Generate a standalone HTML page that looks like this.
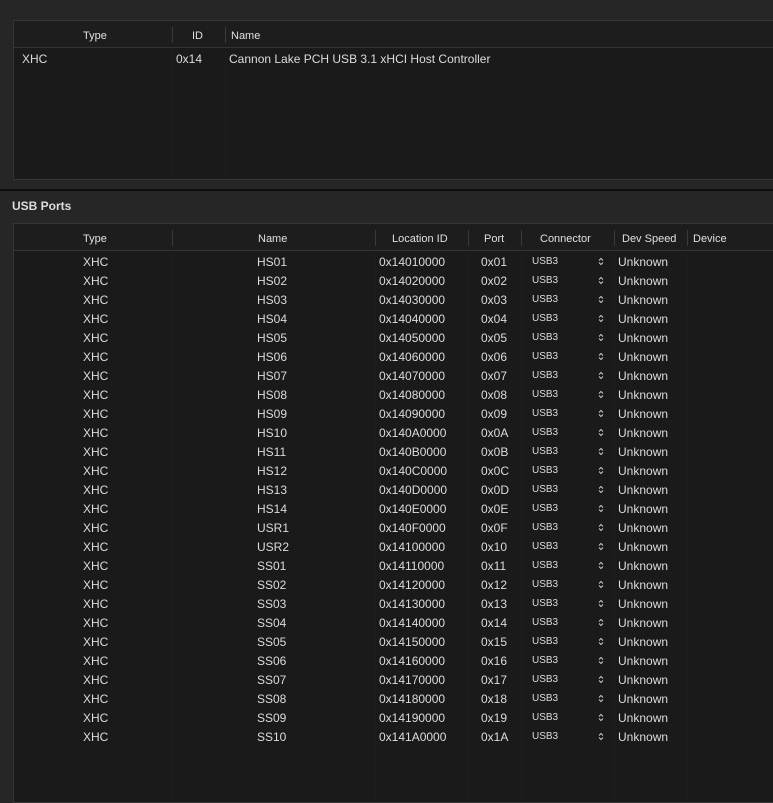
<!DOCTYPE html>
<html><head><style>
*{margin:0;padding:0;box-sizing:border-box}
body{width:773px;height:793px;background:#262626;font-family:"Liberation Sans",sans-serif;color:#dcdcdc;font-size:12px;position:relative;overflow:hidden}
.a{position:absolute;white-space:nowrap}
.tbl{position:absolute;background:#1a1a1a;border:1px solid #363636}
.hd{position:absolute;left:0;right:0;top:0;height:27px;border-bottom:1px solid #343434;background:#1d1d1d}
.sep{position:absolute;width:1px;background:#3a3a3a;top:6px;height:16px}
.col{position:absolute;top:28px;bottom:0;width:1px;background:#1d1d1d}
.h{position:absolute;top:9px;font-size:11px;color:#e0e0e0}
</style></head><body>
<div class="tbl" style="left:13px;top:20px;width:770px;height:160px">
 <div class="hd"></div>
 <div class="sep" style="left:158px"></div><div class="sep" style="left:211px"></div>
 <div class="col" style="left:158px"></div><div class="col" style="left:211px"></div>
 <div class="h" style="left:69px">Type</div><div class="h" style="left:178px">ID</div><div class="h" style="left:217px">Name</div>
 <div class="a" style="left:8px;top:31px">XHC</div><div class="a" style="left:162px;top:31px">0x14</div><div class="a" style="left:215px;top:31px">Cannon Lake PCH USB 3.1 xHCI Host Controller</div>
</div>
<div class="a" style="left:0;top:189px;width:773px;height:2px;background:#0e0e0e"></div>
<div class="a" style="left:12px;top:199px;font-weight:bold;font-size:12px">USB Ports</div>
<div class="tbl" style="left:13px;top:223px;width:770px;height:580px">
 <div class="hd"></div>
 <div class="sep" style="left:158px"></div><div class="sep" style="left:361px"></div><div class="sep" style="left:454px"></div><div class="sep" style="left:507px"></div><div class="sep" style="left:600px"></div><div class="sep" style="left:673px"></div>
 <div class="col" style="left:158px"></div><div class="col" style="left:361px"></div><div class="col" style="left:454px"></div><div class="col" style="left:507px"></div><div class="col" style="left:600px"></div><div class="col" style="left:673px"></div>
 <div class="h" style="left:69px">Type</div><div class="h" style="left:244px">Name</div><div class="h" style="left:378px">Location ID</div><div class="h" style="left:470px">Port</div><div class="h" style="left:526px">Connector</div><div class="h" style="left:608px">Dev Speed</div><div class="h" style="left:679px">Device</div>
 <div id="rows"></div>
</div>
<script>
var n=["HS01","HS02","HS03","HS04","HS05","HS06","HS07","HS08","HS09","HS10","HS11","HS12","HS13","HS14","USR1","USR2","SS01","SS02","SS03","SS04","SS05","SS06","SS07","SS08","SS09","SS10"];
var h="";
for(var i=0;i<26;i++){var t=31+i*19;var hx=(i+1).toString(16).toUpperCase();if(hx.length<2)hx="0"+hx;
h+='<div class="a" style="left:69px;top:'+t+'px">XHC</div>'+
'<div class="a" style="left:243px;top:'+t+'px">'+n[i]+'</div>'+
'<div class="a" style="left:365px;top:'+t+'px">0x14'+hx+'0000</div>'+
'<div class="a" style="left:467px;top:'+t+'px">0x'+hx+'</div>'+
'<div class="a" style="left:518px;top:'+(t+1)+'px;font-size:10px">USB3</div>'+
'<svg class="a" style="left:584px;top:'+(t+2)+'px" width="6" height="9" viewBox="0 0 6 9"><path d="M1 3.5L3 1.5L5 3.5M1 5.5L3 7.5L5 5.5" fill="none" stroke="#ccc" stroke-width="1"/></svg>'+
'<div class="a" style="left:604px;top:'+t+'px">Unknown</div>';}
document.getElementById("rows").innerHTML=h;
</script>
</body></html>
